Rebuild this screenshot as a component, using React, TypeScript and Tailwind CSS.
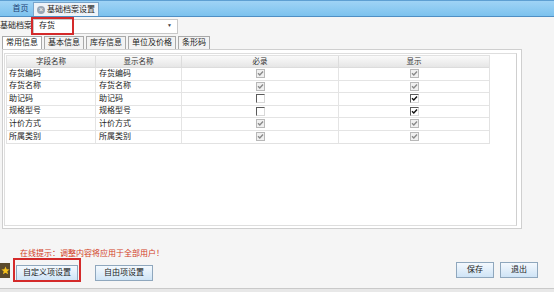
import React from "react";

type Box = "gray" | "off" | "on";

const rows: [string, string, Box, Box][] = [
  ["存货编码", "存货编码", "gray", "gray"],
  ["存货名称", "存货名称", "gray", "gray"],
  ["助记码", "助记码", "off", "on"],
  ["规格型号", "规格型号", "off", "on"],
  ["计价方式", "计价方式", "gray", "gray"],
  ["所属类别", "所属类别", "gray", "gray"],
];

const tabs = ["常用信息", "基本信息", "库存信息", "单位及价格", "条形码"];

function Check({ kind }: { kind: Box }) {
  const border =
    kind === "gray"
      ? "border-[#b8b8b8] bg-[#f0f0f0]"
      : "border-t-[#5a5a5a] border-l-[#5a5a5a] border-r-[#d8d8d8] border-b-[#d8d8d8] bg-white";
  return (
    <span className={`inline-flex w-[9px] h-[9px] border ${border} items-center justify-center`}>
      {kind !== "off" && (
        <svg width="7" height="7" viewBox="0 0 7 7">
          <path
            d="M1 3.2 L2.8 5 L6 1.5"
            fill="none"
            stroke={kind === "gray" ? "#8a8a8a" : "#111"}
            strokeWidth="1.4"
          />
        </svg>
      )}
    </span>
  );
}

function Btn({ label, w }: { label: string; w: string }) {
  return (
    <button
      className={`${w} h-[16px] border border-[#8fa7bd] bg-gradient-to-b from-[#f4f9fe] to-[#cfe4f6] text-[8px] leading-none text-[#1a1a1a] whitespace-nowrap`}
    >
      {label}
    </button>
  );
}

export default function App() {
  return (
    <div className="w-[554px] h-[292px] overflow-hidden bg-[#f5f5f5] font-['Liberation_Sans','Noto_Sans_CJK_SC',sans-serif] text-[#222] relative">
      {/* title tabs */}
      <div className="h-[17px] bg-gradient-to-b from-[#9fd3f5] to-[#7cc2ee] border-t border-t-[#5e9fd2] border-b border-b-[#4f8fc4] flex items-end pl-[8px]">
        <div className="w-[25px] h-[14px] flex items-center justify-center text-[8px] text-[#1d3f73]">首页</div>
        <div className="w-[66px] h-[14px] bg-[#eef3f8] border border-[#7aa6cc] border-b-0 flex items-center gap-[2px] pl-[3px] text-[8px] text-[#1a1a1a] whitespace-nowrap">
          <span className="w-[8px] h-[8px] rounded-full bg-[#9aa7b5] flex items-center justify-center text-white text-[7px] leading-none">×</span>
          基础档案设置
        </div>
      </div>

      {/* archive selector */}
      <div className="h-[18px] flex items-center relative">
        <span className="text-[8px] w-[33px] whitespace-nowrap">基础档案</span>
        <div className="w-[145px] h-[15px] border border-[#c8c8c8] bg-white flex items-center justify-between px-[5px] text-[8px]">
          <span>存货</span>
          <span className="text-[5px] text-[#444]">▼</span>
        </div>
        <div className="absolute left-[31px] top-[0px] w-[43px] h-[18px] border-2 border-[#d42a2a]" />
      </div>

      {/* panel tabs */}
      <div className="h-[13px] mt-[1px] flex items-end pl-[2px] gap-[2px]">
        {tabs.map((t, i) => (
          <div
            key={t}
            className={`h-[13px] px-[3px] border border-[#a9a9a9] border-b-0 flex items-center text-[8px] whitespace-nowrap ${
              i === 0 ? "bg-white" : "bg-[#f3f3f3]"
            }`}
          >
            {t}
          </div>
        ))}
      </div>

      {/* panel */}
      <div className="ml-[2px] w-[520px] h-[180px] border border-[#cfcfcf] bg-white pt-[3px] pl-[1px]">
        <div className="w-[513px] h-[173px] border border-[#dedede] border-r-[#cfcfcf] pt-[1px] pl-[1px]">
          <div className="w-[484px] border border-[#e2e2e2]">
            <div className="flex h-[12px] bg-gradient-to-b from-[#fafafa] to-[#e6e6e6] text-[7.5px] text-[#333] border-b border-[#dcdcdc]">
              <div className="w-[89px] flex items-center justify-center border-r border-[#dcdcdc]">字段名称</div>
              <div className="w-[86px] flex items-center justify-center border-r border-[#dcdcdc]">显示名称</div>
              <div className="w-[157px] flex items-center justify-center border-r border-[#dcdcdc]">必录</div>
              <div className="flex-1 flex items-center justify-center">显示</div>
            </div>
            {rows.map(([a, b, c, d]) => (
              <div key={a} className="flex h-[12.5px] text-[8px] border-b border-[#e4e4e4] last:border-b-0">
                <div className="w-[89px] flex items-center pl-[2px] border-r border-[#e4e4e4]">{a}</div>
                <div className="w-[86px] flex items-center pl-[3px] border-r border-[#e4e4e4]">{b}</div>
                <div className="w-[157px] flex items-center justify-center border-r border-[#e4e4e4]">
                  <Check kind={c} />
                </div>
                <div className="flex-1 flex items-center justify-center">
                  <Check kind={d} />
                </div>
              </div>
            ))}
          </div>
        </div>
      </div>

      {/* tip */}
      <div className="pl-[20px] pt-[19px] h-[31px] text-[8px] text-[#d2401f] leading-[12px]">
        在线提示：调整内容将应用于全部用户！
      </div>

      {/* buttons */}
      <div className="h-[20px] flex items-center relative">
        <div className="w-[10px] h-[15px] bg-[#5b4a2c] flex items-center justify-center">
          <svg width="9" height="9" viewBox="0 0 10 10">
            <path d="M5 0.5 L6.3 3.6 L9.6 3.8 L7 5.9 L7.9 9.3 L5 7.4 L2.1 9.3 L3 5.9 L0.4 3.8 L3.7 3.6 Z" fill="#f6c21c" />
          </svg>
        </div>
        <div className="ml-[6px]">
          <Btn label="自定义项设置" w="w-[62px]" />
        </div>
        <div className="absolute left-[13px] top-[-2px] w-[68px] h-[24px] border-2 border-[#d42a2a]" />
        <div className="ml-[17px]">
          <Btn label="自由项设置" w="w-[58px]" />
        </div>
        <div className="ml-auto flex gap-[6px] mr-[16px]">
          <Btn label="保存" w="w-[38px]" />
          <Btn label="退出" w="w-[38px]" />
        </div>
      </div>

      {/* bottom strip */}
      <div className="mt-[8px] border-t border-[#c9c9c9] h-[8px] bg-[#e8e8e8]" />
    </div>
  );
}
